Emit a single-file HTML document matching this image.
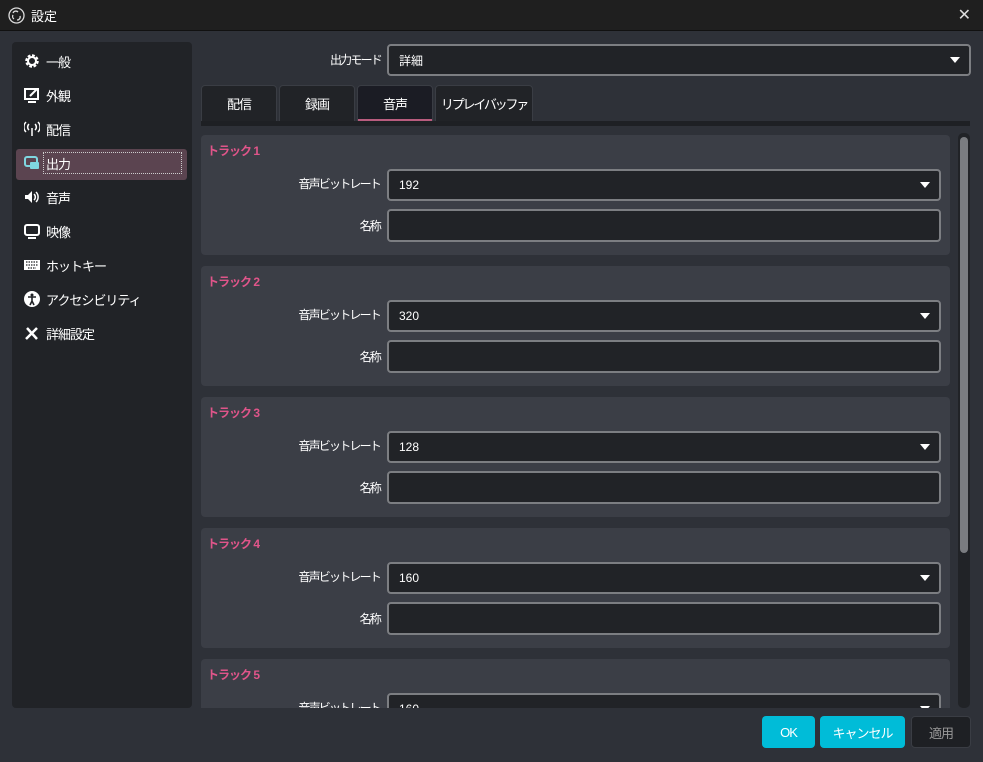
<html><head><style>
*{box-sizing:border-box;margin:0;padding:0}
body{width:983px;height:762px;background:#2e3138;font-family:"Liberation Sans","Noto Sans CJK JP",sans-serif;font-size:13px;color:#fff;position:relative;overflow:hidden}
.a{position:absolute}
.title{left:0;top:0;width:983px;height:31px;background:#1f1f1f;border-bottom:1px solid #111}
.side{left:12px;top:42px;width:180px;height:666px;background:#212327;border-radius:4px}
.it{position:absolute;left:12px;height:20px;display:flex;align-items:center;gap:6px;font-size:13px;letter-spacing:-1px;white-space:nowrap}
.it svg{width:16px;height:16px}
.sel{left:16px;top:149px;width:171px;height:31px;background:#5b4450;border-radius:3px}
.combo{background:#212327;border:2px solid #7c7e82;border-radius:4px;padding-left:10px;display:flex;align-items:center;font-size:12px}
.arr{position:absolute;right:9px;top:50%;margin-top:-3px;width:0;height:0;border-left:5px solid transparent;border-right:5px solid transparent;border-top:6px solid #fff}
.tab{position:absolute;top:85px;height:37px;background:#212327;border-radius:4px 4px 0 0;border:1px solid #3a3d44;display:flex;align-items:center;justify-content:center;font-size:13px;white-space:nowrap;letter-spacing:-1px}
.grp{position:absolute;left:201px;width:749px;height:120px;background:#3b3e46;border-radius:4px}
.gt{position:absolute;left:6px;top:7px;color:#e0558a;font-weight:bold;font-size:12px;letter-spacing:-1px}
.lb{position:absolute;font-size:12px;letter-spacing:-1.8px;white-space:nowrap}
.btn{position:absolute;top:716px;height:32px;border-radius:4px;display:flex;align-items:center;justify-content:center;font-size:13px;letter-spacing:-1px}
</style></head><body>
<div class="a title"></div>
<svg class="a" style="left:8px;top:7px" width="17" height="17" viewBox="0 0 17 17"><circle cx="8.5" cy="8.5" r="7.5" fill="none" stroke="#ddd" stroke-width="1.3"/><path d="M5 6a3 3 0 0 1 5-1M12 9a3 3 0 0 1-3 4M6 12a3 3 0 0 1-1-4" stroke="#ddd" fill="none" stroke-width="1.3"/></svg>
<div class="a" style="left:31px;top:6px;font-size:13px">設定</div>
<div class="a" style="right:12px;top:5px;font-size:16px;color:#ddd">✕</div>
<div class="a side"></div>
<div class="a sel"><div class="a" style="left:27px;top:3px;width:139px;height:22px;border:1px dotted #ccc"></div></div>
<div class="it" style="left:24px;top:51px"><svg viewBox="0 0 16 16"><circle cx="8" cy="8" r="5" fill="none" stroke="#fff" stroke-width="3.5" stroke-dasharray="2.5 1.4"/><circle cx="8" cy="8" r="4" fill="none" stroke="#fff" stroke-width="2"/></svg>一般</div>
<div class="it" style="left:24px;top:85px"><svg viewBox="0 0 16 16"><rect x="1" y="2" width="13" height="10" fill="none" stroke="#fff" stroke-width="2"/><path d="M4 15h8M6 9l7-7" stroke="#fff" stroke-width="2"/></svg>外観</div>
<div class="it" style="left:24px;top:119px"><svg viewBox="0 0 16 16"><path d="M8 7v8M5 3a4 4 0 0 0 0 6M11 3a4 4 0 0 1 0 6M2 1a7 7 0 0 0 0 10M14 1a7 7 0 0 1 0 10" stroke="#fff" stroke-width="1.5" fill="none"/></svg>配信</div>
<div class="it" style="left:24px;top:153px"><svg viewBox="0 0 16 16"><rect x="1" y="2" width="12" height="9" rx="2" fill="none" stroke="#7fd6e0" stroke-width="2"/><rect x="6" y="7" width="9" height="7" rx="1" fill="#7fd6e0"/></svg>出力</div>
<div class="it" style="left:24px;top:187px"><svg viewBox="0 0 16 16"><path d="M1 6h3l4-4v12l-4-4H1z" fill="#fff"/><path d="M10 5a4 4 0 0 1 0 6M12 3a7 7 0 0 1 0 10" stroke="#fff" stroke-width="1.5" fill="none"/></svg>音声</div>
<div class="it" style="left:24px;top:221px"><svg viewBox="0 0 16 16"><rect x="1" y="2" width="14" height="10" rx="2" fill="none" stroke="#fff" stroke-width="2"/><path d="M4 15h8" stroke="#fff" stroke-width="2"/></svg>映像</div>
<div class="it" style="left:24px;top:255px"><svg viewBox="0 0 16 16"><rect x="0" y="3" width="16" height="10" fill="#fff"/><path d="M2 5h12M2 8h12M4 11h8" stroke="#212327" stroke-width="1.2" stroke-dasharray="1.5 1"/></svg>ホットキー</div>
<div class="it" style="left:24px;top:289px"><svg viewBox="0 0 16 16"><circle cx="8" cy="8" r="8" fill="#fff"/><circle cx="8" cy="4" r="1.5" fill="#212327"/><path d="M4 6h8M8 6v4l-2 4M8 10l2 4" stroke="#212327" stroke-width="1.6" fill="none"/></svg>アクセシビリティ</div>
<div class="it" style="left:24px;top:323px"><svg viewBox="0 0 16 16"><path d="M2 14L13 3M3 3l10 11" stroke="#fff" stroke-width="2.5"/></svg>詳細設定</div>

<div class="lb" style="right:602px;top:51px">出力モード</div>
<div class="a combo" style="left:387px;top:44px;width:584px;height:32px">詳細<div class="arr"></div></div>
<div class="tab" style="left:201px;width:76px">配信</div>
<div class="tab" style="left:279px;width:76px">録画</div>
<div class="tab" style="left:357px;width:76px;background:#1b1c24">音声<div class="a" style="left:0;right:0;bottom:0;height:2px;background:#b85c7e"></div></div>
<div class="tab" style="left:435px;width:98px;letter-spacing:-2.2px">リプレイバッファ</div>
<div class="a" style="left:201px;top:121px;width:769px;height:5px;background:#1e2024"></div>

<div class="a" style="left:958px;top:133px;width:12px;height:575px;background:#212327;border-radius:5px"><div class="a" style="left:2px;top:4px;width:8px;height:416px;background:#7a7c80;border-radius:4px"></div></div>
<div class="a" style="left:0;top:133px;width:983px;height:575px;overflow:hidden">
<div class="grp" style="top:2px"><div class="gt">トラック 1</div></div>
<div class="grp" style="top:133px"><div class="gt">トラック 2</div></div>
<div class="grp" style="top:264px"><div class="gt">トラック 3</div></div>
<div class="grp" style="top:395px"><div class="gt">トラック 4</div></div>
<div class="grp" style="top:526px"><div class="gt">トラック 5</div></div>
<div class="lb" style="top:42px;right:603px">音声ビットレート</div>
<div class="a combo" style="left:387px;top:36px;width:554px;height:32px">192<div class="arr"></div></div>
<div class="lb" style="top:84px;right:603px">名称</div>
<div class="a combo" style="left:387px;top:76px;width:554px;height:33px"></div>
<div class="lb" style="top:173px;right:603px">音声ビットレート</div>
<div class="a combo" style="left:387px;top:167px;width:554px;height:32px">320<div class="arr"></div></div>
<div class="lb" style="top:215px;right:603px">名称</div>
<div class="a combo" style="left:387px;top:207px;width:554px;height:33px"></div>
<div class="lb" style="top:304px;right:603px">音声ビットレート</div>
<div class="a combo" style="left:387px;top:298px;width:554px;height:32px">128<div class="arr"></div></div>
<div class="lb" style="top:346px;right:603px">名称</div>
<div class="a combo" style="left:387px;top:338px;width:554px;height:33px"></div>
<div class="lb" style="top:435px;right:603px">音声ビットレート</div>
<div class="a combo" style="left:387px;top:429px;width:554px;height:32px">160<div class="arr"></div></div>
<div class="lb" style="top:477px;right:603px">名称</div>
<div class="a combo" style="left:387px;top:469px;width:554px;height:33px"></div>
<div class="lb" style="top:566px;right:603px">音声ビットレート</div>
<div class="a combo" style="left:387px;top:560px;width:554px;height:32px">160<div class="arr"></div></div>
</div>

<div class="btn" style="left:762px;width:53px;background:#00bcd8">OK</div>
<div class="btn" style="left:820px;width:85px;background:#00bcd8">キャンセル</div>
<div class="btn" style="left:911px;width:60px;background:#1e2024;border:1px solid #3a3d44;color:#999">適用</div>
</body></html>
